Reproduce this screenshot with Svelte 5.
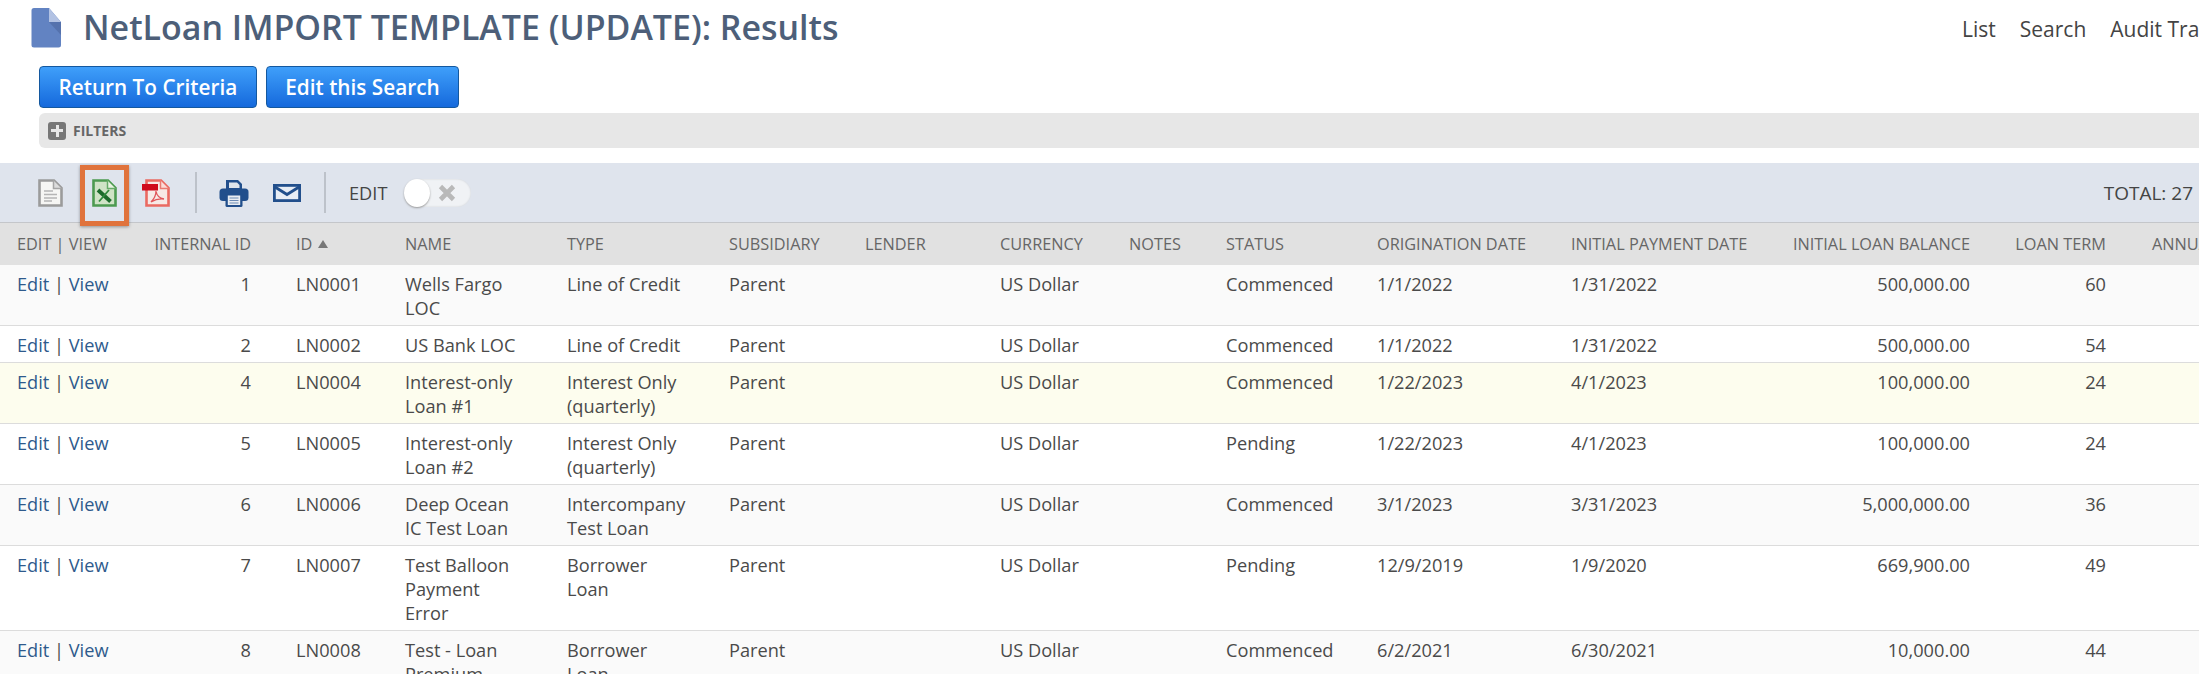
<script>
  const cols = [
    ['Edit | View', 'c-edit'],
    ['Internal ID', 'c-iid num'],
    ['ID', 'c-id'],
    ['Name', 'c-name'],
    ['Type', 'c-type'],
    ['Subsidiary', 'c-sub'],
    ['Lender', 'c-lender'],
    ['Currency', 'c-cur'],
    ['Notes', 'c-notes'],
    ['Status', 'c-status'],
    ['Origination Date', 'c-orig'],
    ['Initial Payment Date', 'c-pay'],
    ['Initial Loan Balance', 'c-bal num'],
    ['Loan Term', 'c-term num'],
    ['Annual Rate', 'c-rate']
  ];
  const rows = [
    { iid: 1, id: 'LN0001', name: 'Wells Fargo LOC', type: 'Line of Credit', status: 'Commenced', orig: '1/1/2022', pay: '1/31/2022', bal: '500,000.00', term: 60, tone: 'grey' },
    { iid: 2, id: 'LN0002', name: 'US Bank LOC', type: 'Line of Credit', status: 'Commenced', orig: '1/1/2022', pay: '1/31/2022', bal: '500,000.00', term: 54, tone: 'white' },
    { iid: 4, id: 'LN0004', name: 'Interest-only Loan #1', type: 'Interest Only (quarterly)', status: 'Commenced', orig: '1/22/2023', pay: '4/1/2023', bal: '100,000.00', term: 24, tone: 'hl' },
    { iid: 5, id: 'LN0005', name: 'Interest-only Loan #2', type: 'Interest Only (quarterly)', status: 'Pending', orig: '1/22/2023', pay: '4/1/2023', bal: '100,000.00', term: 24, tone: 'white' },
    { iid: 6, id: 'LN0006', name: 'Deep Ocean IC Test Loan', type: 'Intercompany Test Loan', status: 'Commenced', orig: '3/1/2023', pay: '3/31/2023', bal: '5,000,000.00', term: 36, tone: 'grey' },
    { iid: 7, id: 'LN0007', name: 'Test Balloon Payment Error', type: 'Borrower Loan', status: 'Pending', orig: '12/9/2019', pay: '1/9/2020', bal: '669,900.00', term: 49, tone: 'white' },
    { iid: 8, id: 'LN0008', name: 'Test - Loan Premium', type: 'Borrower Loan', status: 'Commenced', orig: '6/2/2021', pay: '6/30/2021', bal: '10,000.00', term: 44, tone: 'grey' }
  ];
</script>

<div class="page">
  <header class="head">
    <div class="title">
      <svg class="title-icon" width="31" height="40" viewBox="0 0 31 40" aria-hidden="true">
        <path d="M3 0H18L30 14V37a2.500 2.500 0 0 1-2.500 2.500H3A2.500 2.500 0 0 1 .5 37V2.500A2.500 2.500 0 0 1 3 0Z" fill="#6283c2"/>
        <path d="M18 14L30 27V14Z" fill="#5572ad"/>
        <path d="M18 0L30 14H18Z" fill="#b2c2e3"/>
      </svg>
      <h1>NetLoan IMPORT TEMPLATE (UPDATE): Results</h1>
    </div>
    <nav class="nav"><span>List</span><span>Search</span><span>Audit Trail</span></nav>
  </header>

  <div class="btns">
    <button type="button">Return To Criteria</button>
    <button type="button">Edit this Search</button>
  </div>

  <div class="filters">
    <span class="plus"></span>
    <span class="ftext">FILTERS</span>
  </div>

  <div class="toolbar">
    <div class="tools">
      <svg class="ic-doc" width="25" height="28" viewBox="0 0 25 28" aria-hidden="true">
        <path d="M1.500 1.500H16L23.500 9V26.500H1.500Z" fill="#f6f6f4" stroke="#9b9b9b" stroke-width="2.600"/>
        <path d="M15.500 1.500V9.500H23.500" fill="#dcdcdc" stroke="#a5a5a5" stroke-width="1.500"/>
        <path d="M6 12H15M6 15.500H19M6 19H19M6 22H14" stroke="#b5b5b5" stroke-width="1.300"/>
      </svg>
      <svg class="ic-xls" width="25" height="28" viewBox="0 0 25 28" aria-hidden="true">
        <path d="M1.500 1.500H16L23.500 9V26.500H1.500Z" fill="#cfe3c6" stroke="#4c9a50" stroke-width="2.600"/>
        <path d="M15.500 1.500V9.500H23.500" fill="#e9f3e2" stroke="#66ab68" stroke-width="1.500"/>
        <path d="M6 11L18.500 22.500" stroke="#1c6b2c" stroke-width="3.800"/>
        <path d="M17 11L7 22.500" stroke="#2f8a3d" stroke-width="1.800"/>
      </svg>
      <svg class="ic-pdf" width="28" height="28" viewBox="0 0 28 28" aria-hidden="true">
        <path d="M4.500 1.500H19L26.500 9V26.500H4.500Z" fill="#f7e9e6" stroke="#ea6a62" stroke-width="2.600"/>
        <path d="M18.500 1.500V9.500H26.500" fill="#fbdcd8" stroke="#ea7a72" stroke-width="1.500"/>
        <rect x="0" y="5" width="16" height="6.500" fill="#cf0a1c"/>
        <path d="M9 23C12 20 14 15 14 12C14.500 16 17 19 22 20C18 19.500 13 20.500 9 23Z" fill="none" stroke="#e0555a" stroke-width="1.300"/>
      </svg>
      <span class="sep sep1"></span>
      <svg class="ic-print" width="30" height="28" viewBox="0 0 30 28" aria-hidden="true">
        <path d="M7 1H19L23 5V11H7Z" fill="#224f8c"/>
        <path d="M10 3.500H18L20.500 6V9H10Z" fill="#dfe4eb"/>
        <rect x="0.500" y="9.500" width="29" height="12.500" rx="3.500" fill="#224f8c"/>
        <rect x="6.500" y="15" width="17" height="13" rx="1.500" fill="#224f8c"/>
        <rect x="8.800" y="16.500" width="12.400" height="9.500" fill="#e9edf3"/>
        <path d="M10.500 19H19.500M10.500 21.500H19.500M10.500 24H19.500" stroke="#6d8bb5" stroke-width="1.100"/>
      </svg>
      <svg class="ic-mail" width="28" height="18" viewBox="0 0 28 18" aria-hidden="true">
        <rect x="1.400" y="1.400" width="25.200" height="15.200" fill="#e8edf5" stroke="#224f8c" stroke-width="2.800"/>
        <path d="M2 3L14 10.500L26 3" fill="none" stroke="#224f8c" stroke-width="2.800"/>
      </svg>
      <span class="sep sep2"></span>
      <span class="edit-label">EDIT</span>
      <span class="toggle">
        <span class="knob"></span>
        <svg width="18" height="18" viewBox="0 0 18 18" aria-hidden="true"><path d="M2.500 2.500L15.500 15.500M15.500 2.500L2.500 15.500" stroke="#b9b9b9" stroke-width="4.600"/></svg>
      </span>
    </div>
    <span class="total">TOTAL: 27</span>
  </div>

  <div class="marker"></div>

  <table>
    <colgroup>
      <col style="width:140px"/><col style="width:156px"/><col style="width:109px"/><col style="width:162px"/><col style="width:162px"/><col style="width:136px"/><col style="width:135px"/><col style="width:129px"/><col style="width:97px"/><col style="width:151px"/><col style="width:194px"/><col style="width:219px"/><col style="width:195px"/><col style="width:136px"/><col style="width:180px"/>
    </colgroup>
    <thead>
      <tr>
        {#each cols as [label, cls]}
          <th class={cls}>{label}{#if label === 'ID'}<span class="sort"></span>{/if}</th>
        {/each}
      </tr>
    </thead>
    <tbody>
      {#each rows as r}
        <tr class={r.tone}>
          <td class="c-edit"><a href="#e">Edit</a> | <a href="#v">View</a></td>
          <td class="c-iid num">{r.iid}</td>
          <td>{r.id}</td>
          <td class="c-name">{r.name}</td>
          <td class="c-type">{r.type}</td>
          <td>Parent</td>
          <td></td>
          <td>US Dollar</td>
          <td></td>
          <td>{r.status}</td>
          <td>{r.orig}</td>
          <td>{r.pay}</td>
          <td class="c-bal num">{r.bal}</td>
          <td class="c-term num">{r.term}</td>
          <td class="c-rate"></td>
        </tr>
      {/each}
    </tbody>
  </table>
</div>

<style>
  :global(body) { margin: 0; background: #fff; }
  .page {
    position: relative;
    width: 2199px;
    height: 674px;
    overflow: hidden;
    font-family: "Open Sans", "Noto Sans", sans-serif;
    color: #444;
  }
  .head {
    display: flex;
    height: 66px;
    align-items: flex-start;
    flex-wrap: nowrap;
  }
  .title {
    flex: 0 0 1962px;
    display: flex;
    align-items: flex-start;
    padding: 8px 0 0 31px;
    box-sizing: border-box;
  }
  h1 {
    margin: -1px 0 0 21px;
    font-size: 33.95px;
    line-height: 40px;
    font-weight: 600;
    color: #4d5f79;
    white-space: nowrap;
  }
  .nav {
    flex: none;
    display: flex;
    gap: 24px;
    padding-top: 15px;
    font-size: 21px;
    line-height: 28px;
    color: #444;
    white-space: nowrap;
  }
  .btns {
    display: flex;
    gap: 9px;
    height: 42px;
    padding-left: 39px;
  }
  button {
    height: 42px;
    padding: 0 18.5px;
    border: 1px solid #14589f;
    border-radius: 4px;
    background: linear-gradient(#3f9ffa, #1569dc);
    color: #fff;
    font: 600 20.75px "Open Sans", sans-serif;
    white-space: nowrap;
  }
  .filters {
    display: flex;
    align-items: center;
    margin: 5px 0 0 39px;
    padding-left: 9px;
    height: 35px;
    background: #e7e7e7;
    border-radius: 6px 0 0 6px;
  }
  .plus {
    position: relative;
    width: 18px;
    height: 18px;
    border-radius: 3px;
    background: #777;
  }
  .plus::before, .plus::after {
    content: "";
    position: absolute;
    background: #e7e7e7;
  }
  .plus::before { left: 3px; right: 3px; top: 7.500px; height: 3px; }
  .plus::after { top: 3px; bottom: 3px; left: 7.500px; width: 3px; }
  .ftext {
    margin-left: 7px;
    font-size: 14px;
    font-weight: 700;
    color: #666;
  }
  .toolbar {
    display: flex;
    justify-content: space-between;
    align-items: center;
    margin-top: 15px;
    height: 59px;
    background: #dfe4ed;
    border-bottom: 1px solid #c4c6ca;
    padding-right: 6px;
  }
  .tools {
    display: flex;
    align-items: center;
    padding-left: 38px;
  }
  .ic-xls { margin-left: 29px; }
  .ic-pdf { margin-left: 25px; }
  .sep { width: 2px; height: 41px; background: #bdc2ca; }
  .sep1 { margin-left: 25px; }
  .ic-print { margin-left: 22px; }
  .ic-mail { margin-left: 24px; }
  .sep2 { margin-left: 23px; }
  .edit-label { margin-left: 23px; font-size: 18.2px; color: #444; }
  .toggle {
    position: relative;
    display: flex;
    align-items: center;
    justify-content: flex-end;
    box-sizing: border-box;
    width: 67px;
    height: 28px;
    margin-left: 17px;
    padding-right: 15px;
    border-radius: 14px;
    background: #f0f2f5;
    box-shadow: inset 0 0 2px #c8ccd2;
  }
  .knob {
    position: absolute;
    left: 0;
    top: 0;
    width: 26px;
    height: 28px;
    border-radius: 50%;
    background: #fff;
    box-shadow: 0 1px 2px #999;
  }
  .total { font-size: 19px; color: #444; }
  .marker {
    position: absolute;
    left: 80px;
    top: 165px;
    width: 49px;
    height: 61px;
    box-sizing: border-box;
    border: 5px solid #e0733c;
    box-shadow: 0 1px 3px rgba(0, 0, 0, .35);
    z-index: 2;
  }
  table {
    border-collapse: separate;
    border-spacing: 0;
    table-layout: fixed;
    width: 2301px;
    font-size: 18.2px;
    line-height: 24px;
  }
  th {
    height: 42px;
    padding: 0;
    background: #e1e1e1;
    text-align: left;
    font-weight: 400;
    font-size: 16.300px;
    color: #666;
    text-transform: uppercase;
    white-space: nowrap;
    vertical-align: middle;
  }
  td {
    padding: 7px 0 5px;
    border-bottom: 1px solid #dcdcdc;
    vertical-align: top;
    color: #4a4a4a;
  }
  .c-edit { padding-left: 17px; }
  a { color: #2e5a8c; text-decoration: none; }
  .num { text-align: right; }
  .c-iid { padding-right: 45px; }
  .c-bal, .c-term { padding-right: 15px; }
  .c-name, .c-type { padding-right: 47px; }
  .c-rate { padding-left: 31px; }
  .sort {
    display: inline-block;
    margin-left: 6px;
    border-left: 5px solid transparent;
    border-right: 5px solid transparent;
    border-bottom: 8px solid #777;
    vertical-align: 2px;
  }
  .grey { background: #fafafa; }
  .white { background: #fff; }
  .hl { background: #fdfdee; }
</style>
